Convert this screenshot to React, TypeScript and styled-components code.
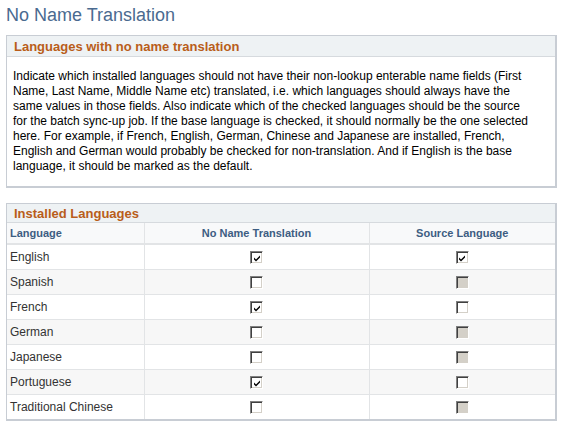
import React from "react";
import styled, { createGlobalStyle } from "styled-components";

const GlobalStyle = createGlobalStyle`
  html, body {
    margin: 0;
    padding: 0;
    background: #fff;
    font-family: "Liberation Sans", Arial, sans-serif;
  }
`;

const Page = styled.div`
  padding: 4px 11px 0 6px;
  display: flex;
  flex-direction: column;
`;

const Title = styled.h1`
  margin: 0 0 9px 0;
  font-size: 18px;
  font-weight: normal;
  line-height: 22px;
  color: #4a6a90;
`;

const Box = styled.section<{ $gap?: number }>`
  border: 1px solid #c8cdd4;
  border-right-width: 2px;
  border-bottom-width: 2px;
  margin-bottom: ${(p) => p.$gap ?? 0}px;
`;

const BoxHeader = styled.div<{ $h: number }>`
  height: ${(p) => p.$h}px;
  display: flex;
  align-items: center;
  padding-left: 7px;
  background: #eef2f4;
  border-bottom: 1px solid #d6dade;
  font-size: 13px;
  font-weight: bold;
  color: #b95d1a;
`;

const Body = styled.p`
  margin: 0;
  padding: 12px 10px 12px 6px;
  font-size: 12px;
  line-height: 15px;
  color: #000;
  white-space: nowrap;
`;

const Table = styled.table`
  width: 100%;
  border-collapse: collapse;
  table-layout: fixed;
`;

const Th = styled.th<{ $align?: string }>`
  height: 20px;
  padding: 0 3px;
  text-align: ${(p) => p.$align ?? "center"};
  font-size: 11px;
  font-weight: bold;
  color: #3d5d82;
  background: #f8f9fa;
  border-right: 1px solid #e2e4e6;
  border-bottom: 2px solid #e2e4e6;
  &:last-child {
    border-right: none;
  }
`;

const Row = styled.tr<{ $alt: boolean }>`
  background: ${(p) => (p.$alt ? "#f7f7f7" : "#fff")};
`;

const Td = styled.td<{ $align?: string }>`
  height: 24px;
  padding: 0 3px;
  text-align: ${(p) => p.$align ?? "center"};
  font-size: 12px;
  color: #333;
  border-right: 1px solid #e2e4e6;
  border-bottom: 1px solid #e2e4e6;
  &:last-child {
    border-right: none;
  }
  tr:last-child > & {
    border-bottom: none;
  }
`;

const Check = styled.span<{ $disabled?: boolean }>`
  display: inline-flex;
  align-items: center;
  justify-content: center;
  vertical-align: middle;
  width: 13px;
  height: 13px;
  box-sizing: border-box;
  background: ${(p) => (p.$disabled ? "#d4d0c8" : "#fff")};
  border-top: 1px solid #808080;
  border-left: 1px solid #808080;
  border-right: 1px solid #fff;
  border-bottom: 1px solid #fff;
  box-shadow: inset 1px 1px 0 #404040, inset -1px -1px 0 #d4d0c8;
`;

function CheckBox({ checked, disabled }: { checked?: boolean; disabled?: boolean }) {
  return (
    <Check $disabled={disabled}>
      {checked && (
        <svg width="9" height="9" viewBox="0 0 9 9" style={{ marginLeft: 1, marginTop: 1 }}>
          <path d="M1 3.5 L3 5.5 L7 1.5 L7 3.5 L3 7.5 L1 5.5 Z" fill="#000" />
        </svg>
      )}
    </Check>
  );
}

const description = [
  "Indicate which installed languages should not have their non-lookup enterable name fields (First",
  "Name, Last Name, Middle Name etc) translated, i.e. which languages should always have the",
  "same values in those fields. Also indicate which of the checked languages should be the source",
  "for the batch sync-up job. If the base language is checked, it should normally be the one selected",
  "here. For example, if French, English, German, Chinese and Japanese are installed, French,",
  "English and German would probably be checked for non-translation. And if English is the base",
  "language, it should be marked as the default.",
];

const languages = [
  { name: "English", noTrans: true, source: true },
  { name: "Spanish", noTrans: false, source: false },
  { name: "French", noTrans: true, source: false },
  { name: "German", noTrans: false, source: false },
  { name: "Japanese", noTrans: false, source: false },
  { name: "Portuguese", noTrans: true, source: false },
  { name: "Traditional Chinese", noTrans: false, source: false },
];

function App() {
  return (
    <Page>
      <GlobalStyle />
      <Title>No Name Translation</Title>
      <Box $gap={15}>
        <BoxHeader $h={20}>Languages with no name translation</BoxHeader>
        <Body>
          {description.map((line, i) => (
            <React.Fragment key={i}>
              {line}
              {i < description.length - 1 && <br />}
            </React.Fragment>
          ))}
        </Body>
      </Box>
      <Box>
        <BoxHeader $h={18}>Installed Languages</BoxHeader>
        <Table>
          <colgroup>
            <col style={{ width: 137 }} />
            <col style={{ width: 225 }} />
            <col />
          </colgroup>
          <thead>
            <tr>
              <Th $align="left">Language</Th>
              <Th>No Name Translation</Th>
              <Th>Source Language</Th>
            </tr>
          </thead>
          <tbody>
            {languages.map((l, i) => (
              <Row key={l.name} $alt={i % 2 === 1}>
                <Td $align="left">{l.name}</Td>
                <Td>
                  <CheckBox checked={l.noTrans} />
                </Td>
                <Td>
                  <CheckBox checked={l.source} disabled={!l.noTrans} />
                </Td>
              </Row>
            ))}
          </tbody>
        </Table>
      </Box>
    </Page>
  );
}

export default App;
